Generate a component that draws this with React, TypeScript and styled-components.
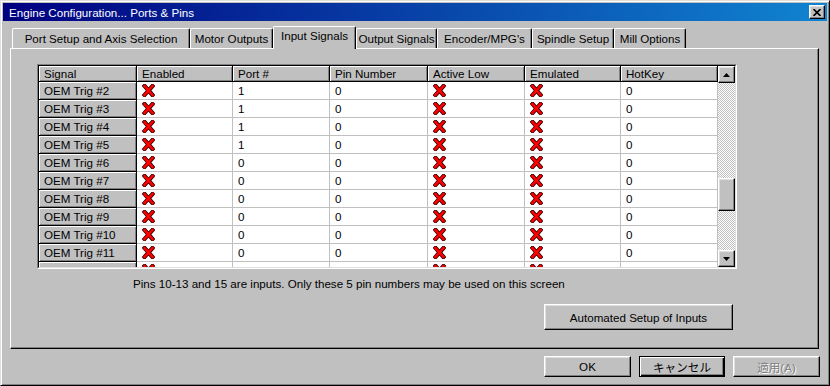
import React from 'react';
import styled, { createGlobalStyle, css } from 'styled-components';

const GlobalStyle = createGlobalStyle`
  html, body {
    margin: 0;
    padding: 0;
    background: #c0c0c0;
  }
  body {
    font-family: "Liberation Sans", "Noto Sans CJK JP", sans-serif;
    font-size: 11.6px;
    color: #000;
  }
`;

const raised = css`
  border: 1px solid;
  border-color: #fff #000 #000 #fff;
  box-shadow: inset -1px -1px #808080, inset 1px 1px #dfdfdf;
`;

const Window = styled.div`
  width: 830px;
  height: 386px;
  box-sizing: border-box;
  background: #c0c0c0;
  border: 1px solid;
  border-color: #dfdfdf #000 #000 #dfdfdf;
  box-shadow: inset 1px 1px #fff, inset -1px -1px #808080;
  padding: 2px;
  display: flex;
  flex-direction: column;
`;

const TitleBar = styled.div`
  height: 18px;
  display: flex;
  align-items: center;
  justify-content: space-between;
  padding: 0 2px 0 6px;
  background: linear-gradient(to right, #000080, #1084d0);
  color: #fff;
  font-size: 11.6px;
`;

const CloseButton = styled.div`
  width: 16px;
  height: 14px;
  box-sizing: border-box;
  background: #c0c0c0;
  ${raised};
  display: flex;
  align-items: center;
  justify-content: center;
`;

const TabStrip = styled.div`
  display: flex;
  align-items: flex-end;
  height: 22px;
  margin-top: 5px;
  padding-left: 9px;
  position: relative;
  z-index: 1;
`;

const Tab = styled.div<{ $w: number; $active?: boolean }>`
  width: ${p => p.$w}px;
  height: ${p => (p.$active ? 23 : 20)}px;
  margin-bottom: ${p => (p.$active ? -1 : 0)}px;
  box-sizing: border-box;
  background: #c0c0c0;
  border-top: 1px solid #fff;
  border-left: 1px solid #fff;
  border-right: 1px solid #000;
  border-radius: 2px 2px 0 0;
  box-shadow: inset -1px 0 #808080;
  display: flex;
  align-items: ${p => (p.$active ? 'flex-start' : 'center')};
  padding-top: ${p => (p.$active ? 2 : 0)}px;
  justify-content: center;
  white-space: nowrap;
`;

const Panel = styled.div`
  margin-left: 7px;
  width: 809px;
  height: 301px;
  box-sizing: border-box;
  border: 1px solid;
  border-color: #fff #000 #000 #fff;
  box-shadow: inset -1px -1px #808080;
  padding: 15px 0 0 26px;
  display: flex;
  flex-direction: column;
`;

const GridFrame = styled.div`
  width: 700px;
  height: 205px;
  box-sizing: border-box;
  border: 1px solid;
  border-color: #808080 #fff #fff #808080;
`;

const GridInner = styled.div`
  height: 100%;
  box-sizing: border-box;
  border: 1px solid;
  border-color: #000 #dfdfdf #dfdfdf #000;
  display: flex;
  overflow: hidden;
`;

const Table = styled.div`
  display: grid;
  grid-template-columns: 98px 96px 97px 98px 97px 96px 97px;
  grid-template-rows: 16px;
  grid-auto-rows: 18px;
  background: #fff;
  overflow: hidden;
`;

const fixedCell = css`
  background: #c0c0c0;
  border-right: 1px solid #000;
  border-bottom: 1px solid #000;
  box-shadow: inset 1px 1px #fff, inset -1px -1px #808080;
`;

const Cell = styled.div<{ $fixed?: boolean }>`
  box-sizing: border-box;
  display: flex;
  align-items: center;
  padding-left: 5px;
  white-space: nowrap;
  overflow: hidden;
  ${p =>
    p.$fixed
      ? fixedCell
      : css`
          border-right: 1px solid #c0c0c0;
          border-bottom: 1px solid #c0c0c0;
        `}
`;

const ScrollBar = styled.div`
  width: 17px;
  flex-shrink: 0;
  display: flex;
  flex-direction: column;
`;

const ScrollButton = styled.div`
  width: 17px;
  height: 17px;
  box-sizing: border-box;
  background: #c0c0c0;
  ${raised};
  display: flex;
  align-items: center;
  justify-content: center;
  flex-shrink: 0;
`;

const Track = styled.div`
  flex: 1;
  display: flex;
  flex-direction: column;
  background-color: #fff;
  background-image: conic-gradient(#c0c0c0 25%, #fff 0 50%, #c0c0c0 0 75%, #fff 0);
  background-size: 2px 2px;
`;

const TrackGap = styled.div<{ $h?: number }>`
  ${p => (p.$h !== undefined ? `height: ${p.$h}px;` : 'flex: 1;')}
`;

const Thumb = styled.div`
  height: 33px;
  box-sizing: border-box;
  background: #c0c0c0;
  ${raised};
`;

const Note = styled.div`
  margin: 8px 0 0 96px;
  line-height: 14px;
`;

const ActionRow = styled.div`
  display: flex;
  justify-content: flex-end;
  padding-right: 85px;
  margin-top: 13px;
`;

const Button = styled.div<{ $w: number; $h?: number; $default?: boolean; $disabled?: boolean }>`
  width: ${p => p.$w}px;
  height: ${p => p.$h ?? 21}px;
  box-sizing: border-box;
  background: #c0c0c0;
  display: flex;
  align-items: center;
  justify-content: center;
  font-family: "Liberation Sans", "Noto Sans CJK JP", sans-serif;
  font-size: 11.6px;
  ${p =>
    p.$default
      ? css`
          border: 1px solid #000;
          box-shadow: inset 1px 1px #fff, inset -1px -1px #000, inset -2px -2px #808080;
        `
      : raised}
  ${p =>
    p.$disabled &&
    css`
      color: #808080;
      text-shadow: 1px 1px #fff;
    `}
`;

const DialogButtons = styled.div`
  display: flex;
  justify-content: flex-end;
  gap: 8px;
  margin-top: 7px;
  padding-right: 7px;
`;

const RedX = () => (
  <svg width="13" height="13" viewBox="0 0 13 13">
    <path d="M2.5 2 L10.5 11 M10.5 2 L2.5 11" stroke="#300" strokeWidth="4.2" strokeLinecap="square" />
    <path d="M2.5 2 L10.5 11 M10.5 2 L2.5 11" stroke="#f00" strokeWidth="2.6" strokeLinecap="square" />
  </svg>
);

const Arrow = ({ down }: { down?: boolean }) => (
  <svg width="7" height="4" viewBox="0 0 7 4">
    <polygon points={down ? '0,0 7,0 3.5,4' : '0,4 7,4 3.5,0'} fill="#000" />
  </svg>
);

const tabs = [
  { label: 'Port Setup and Axis Selection', w: 178 },
  { label: 'Motor Outputs', w: 83 },
  { label: 'Input Signals', w: 83, active: true },
  { label: 'Output Signals', w: 81 },
  { label: "Encoder/MPG's", w: 95 },
  { label: 'Spindle Setup', w: 82 },
  { label: 'Mill Options', w: 72 },
];

const headers = ['Signal', 'Enabled', 'Port #', 'Pin Number', 'Active Low', 'Emulated', 'HotKey'];

const rows = Array.from({ length: 11 }, (_, i) => ({
  name: `OEM Trig #${i + 2}`,
  port: i < 4 ? '1' : '0',
}));

export default function App() {
  return (
    <>
      <GlobalStyle />
      <Window>
        <TitleBar>
          <span>Engine Configuration... Ports &amp; Pins</span>
          <CloseButton>
            <svg width="8" height="7" viewBox="0 0 8 7">
              <path d="M0.5 0 L7.5 7 M7.5 0 L0.5 7" stroke="#000" strokeWidth="1.6" />
            </svg>
          </CloseButton>
        </TitleBar>

        <TabStrip>
          {tabs.map(t => (
            <Tab key={t.label} $w={t.w} $active={t.active}>
              {t.label}
            </Tab>
          ))}
        </TabStrip>

        <Panel>
          <GridFrame>
            <GridInner>
              <Table>
                {headers.map(h => (
                  <Cell key={h} $fixed>
                    {h}
                  </Cell>
                ))}
                {rows.map(r => (
                  <React.Fragment key={r.name}>
                    <Cell $fixed>{r.name}</Cell>
                    <Cell><RedX /></Cell>
                    <Cell>{r.port}</Cell>
                    <Cell>0</Cell>
                    <Cell><RedX /></Cell>
                    <Cell><RedX /></Cell>
                    <Cell>0</Cell>
                  </React.Fragment>
                ))}
              </Table>
              <ScrollBar>
                <ScrollButton><Arrow /></ScrollButton>
                <Track>
                  <TrackGap $h={95} />
                  <Thumb />
                  <TrackGap />
                </Track>
                <ScrollButton><Arrow down /></ScrollButton>
              </ScrollBar>
            </GridInner>
          </GridFrame>

          <Note>Pins 10-13 and 15 are inputs. Only these 5 pin numbers may be used on this screen</Note>

          <ActionRow>
            <Button $w={189} $h={26}>Automated Setup of Inputs</Button>
          </ActionRow>
        </Panel>

        <DialogButtons>
          <Button $w={87}>OK</Button>
          <Button $w={86} $default>キャンセル</Button>
          <Button $w={87} $disabled>適用(A)</Button>
        </DialogButtons>
      </Window>
    </>
  );
}
